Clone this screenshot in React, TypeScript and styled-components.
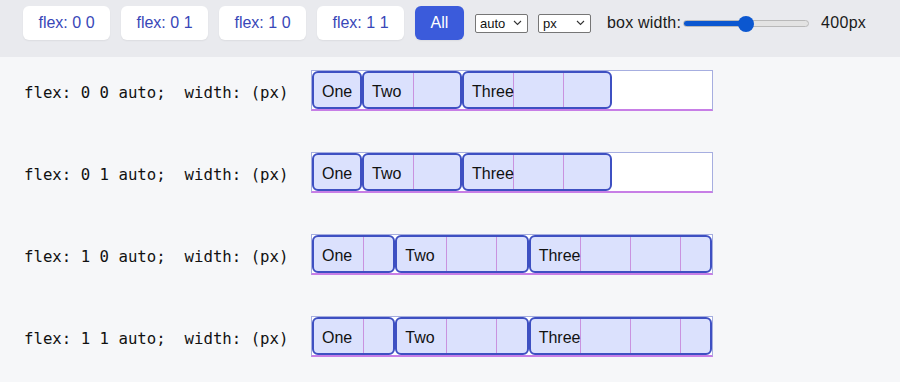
import * as React from "react";
import styled, { createGlobalStyle } from "styled-components";

const GlobalStyle = createGlobalStyle`
  body {
    margin: 0;
    background: #f6f7f9;
    font-family: "Liberation Sans", Arial, sans-serif;
  }
`;

const Toolbar = styled.div`
  display: flex;
  align-items: center;
  padding: 6px 0 17px 23px;
  background: #e9eaee;
`;

const ModeButton = styled.button<{ active?: boolean }>`
  height: 34px;
  width: ${(p) => (p.active ? "49px" : "87px")};
  margin-right: 11px;
  padding: 0;
  border: none;
  border-radius: 6px;
  background: ${(p) => (p.active ? "#3b5bdb" : "#ffffff")};
  color: ${(p) => (p.active ? "#ffffff" : "#3847b8")};
  font-family: "Liberation Sans", Arial, sans-serif;
  font-size: 16px;
  box-shadow: 0 1px 2px rgba(0, 0, 0, 0.06);
  cursor: pointer;
`;

const SelectWrap = styled.label`
  position: relative;
  display: inline-flex;
  margin-right: 10px;
`;

const Select = styled.select`
  appearance: none;
  width: 53px;
  height: 19px;
  padding: 0 0 0 4px;
  border: 1px solid #767676;
  border-radius: 2px;
  background: #ffffff;
  color: #111;
  font-family: "Liberation Sans", Arial, sans-serif;
  font-size: 13px;
  line-height: 17px;
`;

const Chevron = styled.svg`
  position: absolute;
  right: 6px;
  top: 6px;
  pointer-events: none;
`;

const WidthLabel = styled.span`
  margin-left: 6px;
  font-size: 16px;
  letter-spacing: 0.2px;
  color: #1a1a1a;
`;

const Range = styled.input`
  appearance: none;
  -webkit-appearance: none;
  width: 126px;
  height: 7px;
  margin: 1px 0 0 2px;
  border: 1px solid #b9b9b9;
  border-radius: 4px;
  box-sizing: border-box;
  outline: none;

  &::-webkit-slider-thumb {
    -webkit-appearance: none;
    width: 16px;
    height: 16px;
    border-radius: 50%;
    background: #0b57d0;
    border: none;
  }
`;

const WidthValue = styled.span`
  margin-left: 12px;
  font-size: 16px;
  letter-spacing: 0.3px;
  color: #1a1a1a;
`;

const Rows = styled.div`
  display: flex;
  flex-direction: column;
  gap: 41px;
  padding: 13px 0 0 24px;
`;

const Row = styled.div`
  display: flex;
  align-items: center;
`;

const Label = styled.span`
  width: 287px;
  padding-top: 3px;
  font-family: "DejaVu Sans Mono", "Liberation Mono", monospace;
  font-size: 15.7px;
  white-space: pre;
  color: #111;
`;

const Box = styled.div<{ w: number }>`
  display: flex;
  width: ${(p) => p.w}px;
  height: 38px;
  background: #ffffff;
  border: 1px solid #a6aee0;
  border-bottom: 2px solid #c77ee6;
`;

const Item = styled.div<{ basis: number; grow: number; shrink: number }>`
  flex: ${(p) => `${p.grow} ${p.shrink} auto`};
  width: ${(p) => p.basis}px;
  box-sizing: border-box;
  display: flex;
  align-items: center;
  padding: 3px 0 0 8px;
  border: 2px solid #3e50c2;
  border-radius: 6px;
  background-color: #dbe1fd;
  background-image: repeating-linear-gradient(
    to right,
    transparent 0 49px,
    #c992df 49px 50px
  );
  font-size: 16px;
  color: #111;
  overflow: hidden;
`;

const modes = [
  { grow: 0, shrink: 0 },
  { grow: 0, shrink: 1 },
  { grow: 1, shrink: 0 },
  { grow: 1, shrink: 1 },
];

const items = [
  { name: "One", basis: 50 },
  { name: "Two", basis: 100 },
  { name: "Three", basis: 150 },
];

function ChevronIcon() {
  return (
    <Chevron width="9" height="6" viewBox="0 0 9 6">
      <path d="M1 1l3.5 3.5L8 1" fill="none" stroke="#333" strokeWidth="1.1" />
    </Chevron>
  );
}

export default function App(): JSX.Element {
  const [boxWidth, setBoxWidth] = React.useState(400);
  const pct = (boxWidth / 800) * 100;

  return (
    <>
      <GlobalStyle />
      <Toolbar>
        {modes.map((m) => (
          <ModeButton key={`${m.grow}${m.shrink}`}>
            flex: {m.grow} {m.shrink}
          </ModeButton>
        ))}
        <ModeButton active>All</ModeButton>
        <SelectWrap>
          <Select defaultValue="auto">
            <option>auto</option>
            <option>0</option>
          </Select>
          <ChevronIcon />
        </SelectWrap>
        <SelectWrap>
          <Select defaultValue="px">
            <option>px</option>
            <option>%</option>
          </Select>
          <ChevronIcon />
        </SelectWrap>
        <WidthLabel>box width:</WidthLabel>
        <Range
          type="range"
          min={0}
          max={800}
          value={boxWidth}
          onChange={(e) => setBoxWidth(Number(e.target.value))}
          style={{
            background: `linear-gradient(to right, #0b57d0 ${pct}%, #e3e3e3 ${pct}%)`,
          }}
        />
        <WidthValue>{boxWidth}px</WidthValue>
      </Toolbar>
      <Rows>
        {modes.map((m) => (
          <Row key={`${m.grow}${m.shrink}`}>
            <Label>{`flex: ${m.grow} ${m.shrink} auto;  width: (px)`}</Label>
            <Box w={boxWidth}>
              {items.map((it) => (
                <Item key={it.name} basis={it.basis} grow={m.grow} shrink={m.shrink}>
                  {it.name}
                </Item>
              ))}
            </Box>
          </Row>
        ))}
      </Rows>
    </>
  );
}
